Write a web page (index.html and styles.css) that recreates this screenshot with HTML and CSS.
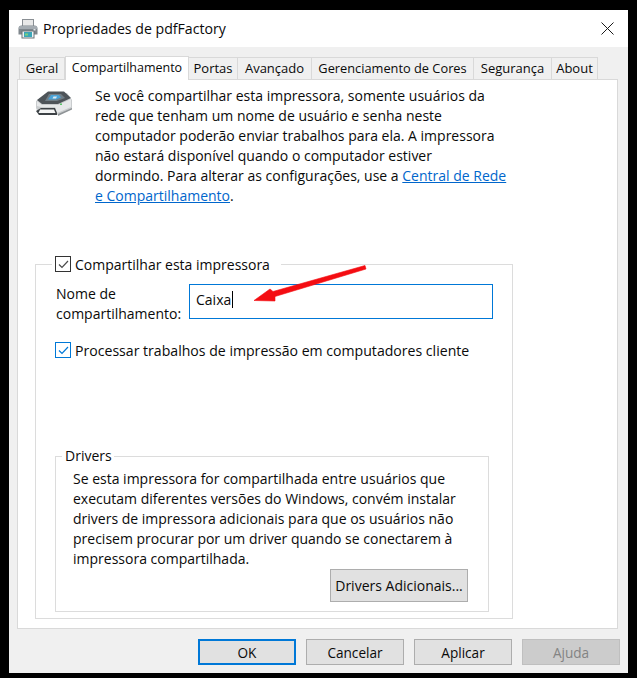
FILE: index.html
```html
<!DOCTYPE html>
<html lang="pt-BR">
<head>
<meta charset="utf-8">
<title>Propriedades de pdfFactory</title>
<link rel="stylesheet" href="styles.css">
</head>
<body>
<div class="window">
  <header class="titlebar">
    <svg class="title-icon" width="20" height="20" viewBox="0 0 20 20">
      <rect x="4.5" y="0.5" width="11" height="7" fill="#e8e8e8" stroke="#8a8f94"/>
      <path d="M0.5 9.5 Q0.5 6.5 3.5 6.5 H16.5 Q19.5 6.5 19.5 9.5 V15.5 H0.5 Z" fill="#7f868c"/>
      <rect x="1" y="7" width="18" height="3" fill="#a4abb1"/>
      <rect x="4" y="12" width="12" height="7" fill="#eef3f5" stroke="#6d7479" stroke-width="1"/>
      <rect x="6" y="13" width="8" height="5" fill="#3aa6b8"/>
      <rect x="7" y="14.5" width="3" height="2" fill="#7ad07a"/>
      <rect x="15.5" y="10" width="2" height="1.5" fill="#dfe4e8"/>
    </svg>
    <span class="title-text">Propriedades de pdfFactory</span>
    <svg class="close-icon" width="13" height="13" viewBox="0 0 13 13"><path d="M0.5 0.5 L12.5 12.5 M12.5 0.5 L0.5 12.5" stroke="#1a1a1a" stroke-width="1" fill="none"/></svg>
  </header>

  <main class="dialog">
    <nav class="tabs">
      <div class="tab t-geral">Geral</div>
      <div class="tab active t-comp">Compartilhamento</div>
      <div class="tab t-portas">Portas</div>
      <div class="tab t-avan">Avançado</div>
      <div class="tab t-ger">Gerenciamento de Cores</div>
      <div class="tab t-seg">Segurança</div>
      <div class="tab t-about">About</div>
    </nav>

    <section class="panel">
      <div class="intro">
        <svg class="big-printer" width="38" height="28" viewBox="0 0 38 28">
          <path d="M1 12 L14 4 L32 4 L37 11 L37 20 L22 26 L4 26 L1 19 Z" fill="#c9ccce"/>
          <path d="M2 11 L13 2.5 H29 L36 9 L23 15 H7 Z" fill="#4e5459"/>
          <path d="M14 5 H26 L30 9 L22 12 H10 Z" fill="#6f7d86"/>
          <path d="M16 6 H24 L26 8.5 L21 10.5 H13 Z" fill="#4aa3d8"/>
          <path d="M18.5 7.5 H22 L21 9.5 H17.5 Z" fill="#dbe9f0"/>
          <path d="M2 12 L7 16 H23 L36 10 V18 L22 24 L20 18 H6 L2 17 Z" fill="#e6e8e9"/>
          <path d="M6 19 H20 L22 24 V26 H4 L1 22 Z" fill="#3c4145"/>
          <path d="M5 20.5 H19 L20.5 24 H3.5 Z" fill="#f4f5f5"/>
          <path d="M23 25 L37 19 V20.5 L23 27 Z" fill="#8e9396"/>
          <rect x="25" y="14.5" width="2" height="1.5" fill="#5bc46a"/>
        </svg>
        <p class="intro-text">Se você compartilhar esta impressora, somente usuários da rede que tenham um nome de usuário e senha neste computador poderão enviar trabalhos para ela. A impressora não estará disponível quando o computador estiver<br>dormindo. Para alterar as configurações, use a <a class="link" href="#">Central de Rede e Compartilhamento</a>.</p>
      </div>

      <fieldset class="share-group">
        <legend class="share-legend">
          <span class="check dark"><svg width="13" height="13" viewBox="0 0 13 13"><path d="M2 6.5 L5 9.5 L11 3" fill="none" stroke="#4a4a4a" stroke-width="1.2"/></svg></span>
          <span>Compartilhar esta impressora</span>
        </legend>
        <div class="name-row">
          <label class="name-label">Nome de compartilhamento:</label>
          <div class="name-input"><span>Caixa</span><span class="caret"></span></div>
        </div>
        <div class="client-row">
          <span class="check blue"><svg width="13" height="13" viewBox="0 0 13 13"><path d="M2 6.5 L5 9.5 L11 3" fill="none" stroke="#0078d7" stroke-width="1.2"/></svg></span>
          <span>Processar trabalhos de impressão em computadores cliente</span>
        </div>
        <fieldset class="drivers-group">
          <legend class="drivers-legend">Drivers</legend>
          <p class="drivers-text">Se esta impressora for compartilhada entre usuários que executam diferentes versões do Windows, convém instalar drivers de impressora adicionais para que os usuários não precisem procurar por um driver quando se conectarem à impressora compartilhada.</p>
          <div class="drivers-actions"><button class="btn btn-drivers" type="button">Drivers Adicionais...</button></div>
        </fieldset>
      </fieldset>
    </section>

    <footer class="footer">
      <button class="btn btn-foot btn-default" type="button">OK</button>
      <button class="btn btn-foot" type="button">Cancelar</button>
      <button class="btn btn-foot" type="button">Aplicar</button>
      <button class="btn btn-foot btn-disabled" type="button">Ajuda</button>
    </footer>
  </main>

  <svg class="arrow" width="120" height="40" viewBox="0 0 120 40">
    <path d="M112 1.5 L20 27.5 L17 25 L1 36.5 L22 37 L22 32.5 L113 5 Z" fill="#f40d12" stroke="#f40d12" stroke-width="0.6" stroke-linejoin="round"/>
  </svg>
</div>
</body>
</html>
```
FILE: styles.css
```css
* { box-sizing: border-box; }
html, body { margin: 0; height: 100%; }
body {
  background: #000;
  font-family: "Open Sans", "Noto Sans", "Liberation Sans", sans-serif;
  font-size: 14px;
  color: #0a0a0a;
  overflow: hidden;
}
.window {
  position: relative;
  width: 619px;
  height: 663px;
  margin: 10px 0 0 9px;
  background: #f0f0f0;
  display: flex;
  flex-direction: column;
}
.titlebar {
  height: 37px;
  flex: none;
  background: #fff;
  display: flex;
  align-items: center;
  padding: 0 14px 0 9px;
}
.title-icon { flex: none; margin-right: 5px; }
.title-text { flex: 1; font-size: 14.15px; }
.close-icon { flex: none; }
.dialog {
  flex: 1;
  display: flex;
  flex-direction: column;
  padding: 8px 10px 0 8px;
}
.tabs {
  display: flex;
  align-items: flex-end;
  height: 24px;
  padding-left: 2px;
  position: relative;
  z-index: 1;
}
.tab {
  height: 22px;
  background: #f0f0f0;
  border: 1px solid #d9d9d9;
  border-bottom: 0;
  border-left: 0;
  text-align: center;
  line-height: 21px;
  white-space: nowrap;
  font-size: 13px;
}
.tab:first-child { border-left: 1px solid #d9d9d9; }
.tab.active {
  height: 24px;
  margin-bottom: -1px;
  background: #fff;
  border-left: 1px solid #d9d9d9;
  line-height: 21px;
}
.t-geral { width: 46px; }
.t-comp { width: 124px; font-size: 12.5px; }
.t-portas { width: 49px; }
.t-avan { width: 74px; }
.t-ger { width: 162px; font-size: 12.8px; }
.t-seg { width: 78px; }
.t-about { width: 46px; }
.panel {
  height: 550px;
  flex: none;
  background: #fff;
  border: 1px solid #d9d9d9;
  padding: 6px 0 0 17px;
}
.intro { display: flex; height: 168px; }
.big-printer { flex: none; margin: 3px 22px 0 0; }
.intro-text { margin: 0; width: 418px; line-height: 20px; }
.link { color: #0066cc; }
.share-group {
  width: 478px;
  height: 365px;
  margin: 0;
  padding: 0 0 0 19px;
  border: 1px solid #dcdcdc;
  position: relative;
  min-width: 0;
}
.share-legend {
  margin-left: -3px;
  padding: 0 11px 0 3px;
  display: flex;
  align-items: center;
  gap: 4px;
  height: 20px;
}
.check {
  width: 16px;
  height: 16px;
  flex: none;
  background: #fff;
  border: 1px solid #333;
  display: flex;
  align-items: center;
  justify-content: center;
}
.check.blue { border-color: #0078d7; }
.name-row { display: flex; margin-top: 10px; height: 36px; }
.name-label { width: 134px; padding-left: 1px; line-height: 20px; }
.name-input {
  width: 304px;
  height: 35px;
  border: 1px solid #0078d7;
  background: #fff;
  padding: 0 0 5px 6px;
  display: flex;
  align-items: center;
}
.caret { width: 1px; height: 17px; background: #000; margin-left: 1px; }
.client-row { display: flex; align-items: center; gap: 4px; margin-top: 21px; height: 18px; font-size: 14.1px; }
.drivers-group {
  width: 434px;
  height: 166px;
  margin: 87px 0 0 0;
  padding: 0 0 0 17px;
  border: 1px solid #dcdcdc;
  min-width: 0;
}
.drivers-legend { margin-left: -11px; padding: 0 2px 0 3px; height: 20px; line-height: 20px; }
.drivers-text { margin: 3px 0 0; width: 392px; line-height: 20px; }
.drivers-actions { display: flex; justify-content: flex-end; width: 395px; }
.btn {
  font: inherit;
  color: #0a0a0a;
  background: #e1e1e1;
  border: 1px solid #adadad;
  padding: 0;
}
.btn-drivers { width: 138px; height: 33px; }
.footer {
  display: flex;
  justify-content: flex-end;
  gap: 10px;
  padding-top: 10px;
  margin-right: -2px;
}
.btn-foot { width: 98px; height: 26px; font-size: 13.6px; }
.btn-default { border: 2px solid #0078d7; }
.btn-disabled { background: #ccc; border-color: #bfbfbf; color: #838383; }
.arrow { position: absolute; left: 244px; top: 254px; pointer-events: none; }
```
